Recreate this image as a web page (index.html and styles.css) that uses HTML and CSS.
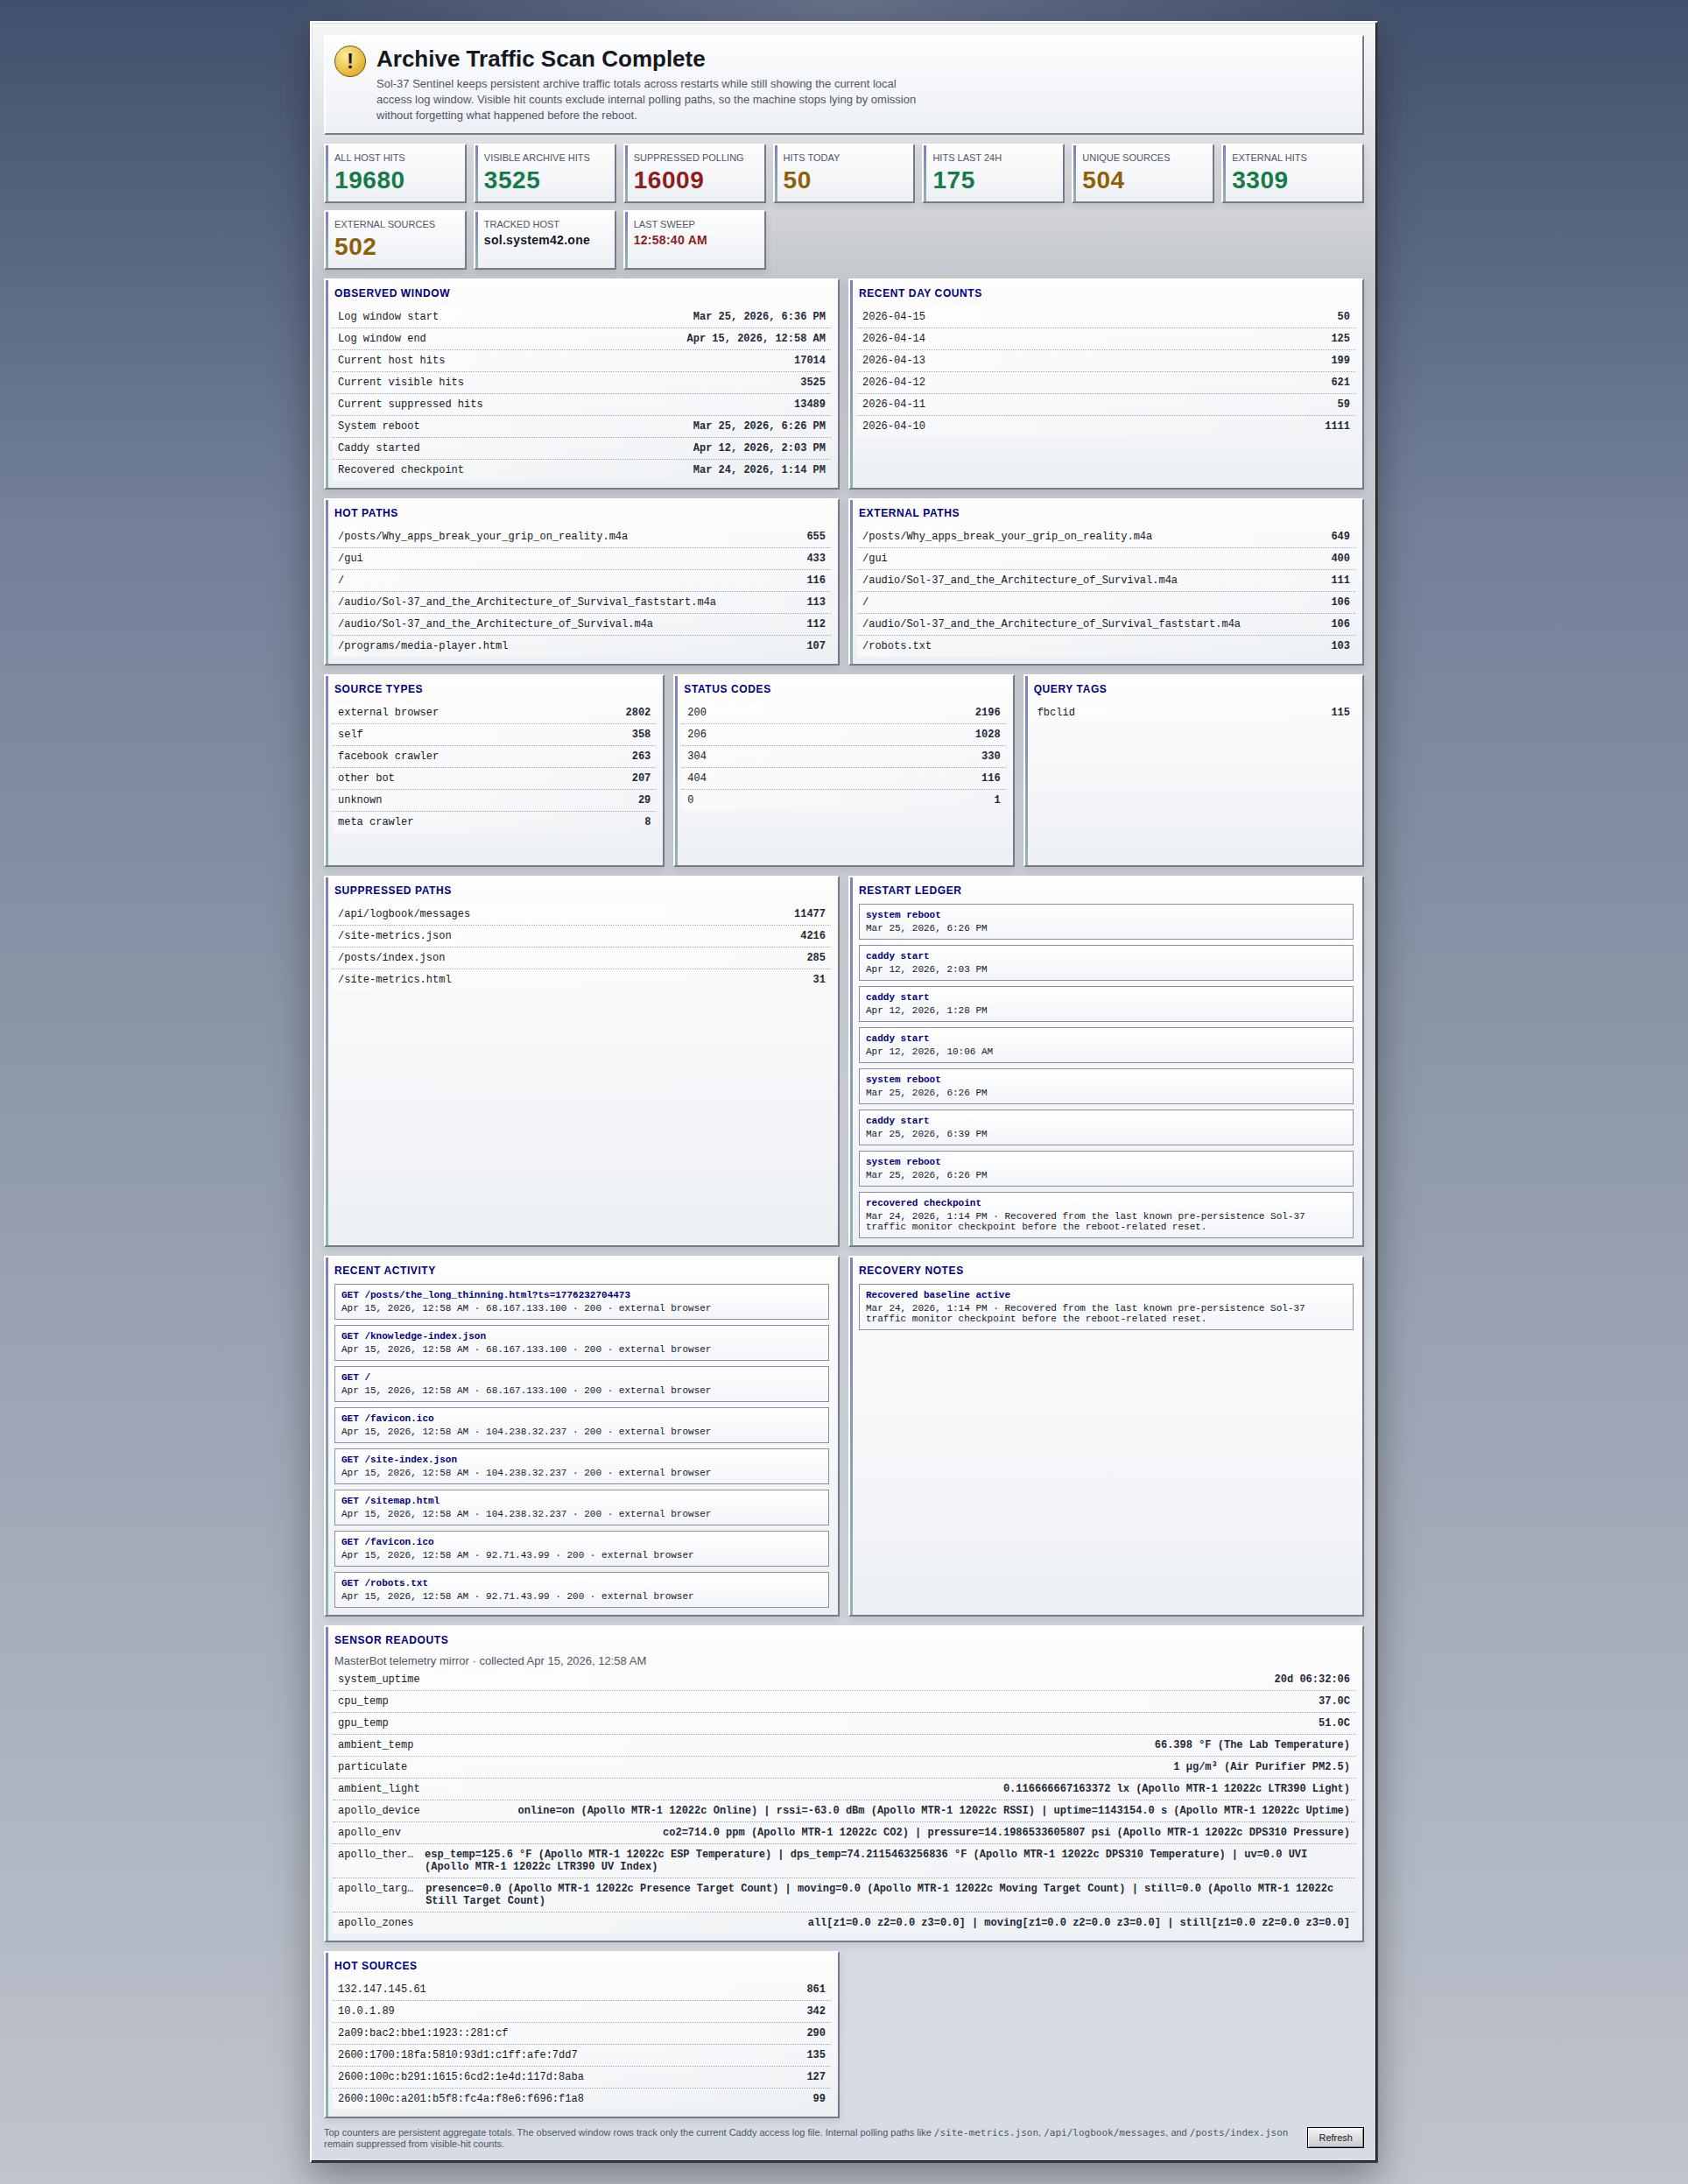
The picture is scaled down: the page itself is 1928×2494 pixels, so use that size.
FILE: index.html
```html
<!DOCTYPE html>
<html lang="en">
<head>
<meta charset="utf-8">
<title>Archive Traffic Scan</title>
<link rel="stylesheet" href="styles.css">
</head>
<body>
<main class="window">
  <header class="hero">
    <div class="badge" aria-hidden="true">!</div>
    <div>
      <h1 class="hero-title">Archive Traffic Scan Complete</h1>
      <p class="copy">Sol-37 Sentinel keeps persistent archive traffic totals across restarts while still showing the current local access log window. Visible hit counts exclude internal polling paths, so the machine stops lying by omission without forgetting what happened before the reboot.</p>
    </div>
  </header>

  <section class="stats">
    <div class="card"><div class="label">All host hits</div><div class="value good">19680</div></div>
    <div class="card"><div class="label">Visible archive hits</div><div class="value good">3525</div></div>
    <div class="card"><div class="label">Suppressed polling</div><div class="value bad">16009</div></div>
    <div class="card"><div class="label">Hits today</div><div class="value warn">50</div></div>
    <div class="card"><div class="label">Hits last 24h</div><div class="value good">175</div></div>
    <div class="card"><div class="label">Unique sources</div><div class="value warn">504</div></div>
    <div class="card"><div class="label">External hits</div><div class="value good">3309</div></div>
    <div class="card"><div class="label">External sources</div><div class="value warn">502</div></div>
    <div class="card"><div class="label">Tracked host</div><div class="value small">sol.system42.one</div></div>
    <div class="card"><div class="label">Last sweep</div><div class="value small bad">12:58:40 AM</div></div>
  </section>

  <div class="grid">
    <section class="panel">
      <h2 class="panel-title">Observed window</h2>
      <dl class="rows">
        <div class="row"><dt>Log window start</dt><dd>Mar 25, 2026, 6:36 PM</dd></div>
        <div class="row"><dt>Log window end</dt><dd>Apr 15, 2026, 12:58 AM</dd></div>
        <div class="row"><dt>Current host hits</dt><dd>17014</dd></div>
        <div class="row"><dt>Current visible hits</dt><dd>3525</dd></div>
        <div class="row"><dt>Current suppressed hits</dt><dd>13489</dd></div>
        <div class="row"><dt>System reboot</dt><dd>Mar 25, 2026, 6:26 PM</dd></div>
        <div class="row"><dt>Caddy started</dt><dd>Apr 12, 2026, 2:03 PM</dd></div>
        <div class="row"><dt>Recovered checkpoint</dt><dd>Mar 24, 2026, 1:14 PM</dd></div>
      </dl>
    </section>
    <section class="panel">
      <h2 class="panel-title">Recent day counts</h2>
      <dl class="rows">
        <div class="row"><dt>2026-04-15</dt><dd>50</dd></div>
        <div class="row"><dt>2026-04-14</dt><dd>125</dd></div>
        <div class="row"><dt>2026-04-13</dt><dd>199</dd></div>
        <div class="row"><dt>2026-04-12</dt><dd>621</dd></div>
        <div class="row"><dt>2026-04-11</dt><dd>59</dd></div>
        <div class="row"><dt>2026-04-10</dt><dd>1111</dd></div>
      </dl>
    </section>
    <section class="panel">
      <h2 class="panel-title">Hot paths</h2>
      <dl class="rows">
        <div class="row"><dt>/posts/Why_apps_break_your_grip_on_reality.m4a</dt><dd>655</dd></div>
        <div class="row"><dt>/gui</dt><dd>433</dd></div>
        <div class="row"><dt>/</dt><dd>116</dd></div>
        <div class="row"><dt>/audio/Sol-37_and_the_Architecture_of_Survival_faststart.m4a</dt><dd>113</dd></div>
        <div class="row"><dt>/audio/Sol-37_and_the_Architecture_of_Survival.m4a</dt><dd>112</dd></div>
        <div class="row"><dt>/programs/media-player.html</dt><dd>107</dd></div>
      </dl>
    </section>
    <section class="panel">
      <h2 class="panel-title">External paths</h2>
      <dl class="rows">
        <div class="row"><dt>/posts/Why_apps_break_your_grip_on_reality.m4a</dt><dd>649</dd></div>
        <div class="row"><dt>/gui</dt><dd>400</dd></div>
        <div class="row"><dt>/audio/Sol-37_and_the_Architecture_of_Survival.m4a</dt><dd>111</dd></div>
        <div class="row"><dt>/</dt><dd>106</dd></div>
        <div class="row"><dt>/audio/Sol-37_and_the_Architecture_of_Survival_faststart.m4a</dt><dd>106</dd></div>
        <div class="row"><dt>/robots.txt</dt><dd>103</dd></div>
      </dl>
    </section>
  </div>

  <div class="grid thirds">
    <section class="panel">
      <h2 class="panel-title">Source types</h2>
      <dl class="rows">
        <div class="row"><dt>external browser</dt><dd>2802</dd></div>
        <div class="row"><dt>self</dt><dd>358</dd></div>
        <div class="row"><dt>facebook crawler</dt><dd>263</dd></div>
        <div class="row"><dt>other bot</dt><dd>207</dd></div>
        <div class="row"><dt>unknown</dt><dd>29</dd></div>
        <div class="row"><dt>meta crawler</dt><dd>8</dd></div>
      </dl>
    </section>
    <section class="panel">
      <h2 class="panel-title">Status codes</h2>
      <dl class="rows">
        <div class="row"><dt>200</dt><dd>2196</dd></div>
        <div class="row"><dt>206</dt><dd>1028</dd></div>
        <div class="row"><dt>304</dt><dd>330</dd></div>
        <div class="row"><dt>404</dt><dd>116</dd></div>
        <div class="row"><dt>0</dt><dd>1</dd></div>
      </dl>
    </section>
    <section class="panel">
      <h2 class="panel-title">Query tags</h2>
      <dl class="rows">
        <div class="row"><dt>fbclid</dt><dd>115</dd></div>
      </dl>
    </section>
  </div>

  <div class="grid">
    <section class="panel">
      <h2 class="panel-title">Suppressed paths</h2>
      <dl class="rows">
        <div class="row"><dt>/api/logbook/messages</dt><dd>11477</dd></div>
        <div class="row"><dt>/site-metrics.json</dt><dd>4216</dd></div>
        <div class="row"><dt>/posts/index.json</dt><dd>285</dd></div>
        <div class="row"><dt>/site-metrics.html</dt><dd>31</dd></div>
      </dl>
    </section>
    <section class="panel">
      <h2 class="panel-title">Restart ledger</h2>
      <ul class="events">
        <li class="event"><strong>system reboot</strong>Mar 25, 2026, 6:26 PM</li>
        <li class="event"><strong>caddy start</strong>Apr 12, 2026, 2:03 PM</li>
        <li class="event"><strong>caddy start</strong>Apr 12, 2026, 1:28 PM</li>
        <li class="event"><strong>caddy start</strong>Apr 12, 2026, 10:06 AM</li>
        <li class="event"><strong>system reboot</strong>Mar 25, 2026, 6:26 PM</li>
        <li class="event"><strong>caddy start</strong>Mar 25, 2026, 6:39 PM</li>
        <li class="event"><strong>system reboot</strong>Mar 25, 2026, 6:26 PM</li>
        <li class="event"><strong>recovered checkpoint</strong>Mar 24, 2026, 1:14 PM · Recovered from the last known pre-persistence Sol-37 traffic monitor checkpoint before the reboot-related reset.</li>
      </ul>
    </section>
    <section class="panel">
      <h2 class="panel-title">Recent activity</h2>
      <ul class="events">
        <li class="event"><strong>GET /posts/the_long_thinning.html?ts=1776232704473</strong>Apr 15, 2026, 12:58 AM · 68.167.133.100 · 200 · external browser</li>
        <li class="event"><strong>GET /knowledge-index.json</strong>Apr 15, 2026, 12:58 AM · 68.167.133.100 · 200 · external browser</li>
        <li class="event"><strong>GET /</strong>Apr 15, 2026, 12:58 AM · 68.167.133.100 · 200 · external browser</li>
        <li class="event"><strong>GET /favicon.ico</strong>Apr 15, 2026, 12:58 AM · 104.238.32.237 · 200 · external browser</li>
        <li class="event"><strong>GET /site-index.json</strong>Apr 15, 2026, 12:58 AM · 104.238.32.237 · 200 · external browser</li>
        <li class="event"><strong>GET /sitemap.html</strong>Apr 15, 2026, 12:58 AM · 104.238.32.237 · 200 · external browser</li>
        <li class="event"><strong>GET /favicon.ico</strong>Apr 15, 2026, 12:58 AM · 92.71.43.99 · 200 · external browser</li>
        <li class="event"><strong>GET /robots.txt</strong>Apr 15, 2026, 12:58 AM · 92.71.43.99 · 200 · external browser</li>
      </ul>
    </section>
    <section class="panel">
      <h2 class="panel-title">Recovery notes</h2>
      <ul class="events">
        <li class="event"><strong>Recovered baseline active</strong>Mar 24, 2026, 1:14 PM · Recovered from the last known pre-persistence Sol-37 traffic monitor checkpoint before the reboot-related reset.</li>
      </ul>
    </section>
    <section class="panel wide">
      <h2 class="panel-title">Sensor readouts</h2>
      <p class="copy">MasterBot telemetry mirror · collected Apr 15, 2026, 12:58 AM</p>
      <dl class="rows">
        <div class="row"><dt>system_uptime</dt><dd>20d 06:32:06</dd></div>
        <div class="row"><dt>cpu_temp</dt><dd>37.0C</dd></div>
        <div class="row"><dt>gpu_temp</dt><dd>51.0C</dd></div>
        <div class="row"><dt>ambient_temp</dt><dd>66.398 °F (The Lab Temperature)</dd></div>
        <div class="row"><dt>particulate</dt><dd>1 µg/m³ (Air Purifier PM2.5)</dd></div>
        <div class="row"><dt>ambient_light</dt><dd>0.116666667163372 lx (Apollo MTR-1 12022c LTR390 Light)</dd></div>
        <div class="row"><dt>apollo_device</dt><dd>online=on (Apollo MTR-1 12022c Online) | rssi=-63.0 dBm (Apollo MTR-1 12022c RSSI) | uptime=1143154.0 s (Apollo MTR-1 12022c Uptime)</dd></div>
        <div class="row"><dt>apollo_env</dt><dd>co2=714.0 ppm (Apollo MTR-1 12022c CO2) | pressure=14.1986533605807 psi (Apollo MTR-1 12022c DPS310 Pressure)</dd></div>
        <div class="row"><dt>apollo_thermals</dt><dd>esp_temp=125.6 °F (Apollo MTR-1 12022c ESP Temperature) | dps_temp=74.2115463256836 °F (Apollo MTR-1 12022c DPS310 Temperature) | uv=0.0 UVI (Apollo MTR-1 12022c LTR390 UV Index)</dd></div>
        <div class="row"><dt>apollo_targets</dt><dd>presence=0.0 (Apollo MTR-1 12022c Presence Target Count) | moving=0.0 (Apollo MTR-1 12022c Moving Target Count) | still=0.0 (Apollo MTR-1 12022c Still Target Count)</dd></div>
        <div class="row"><dt>apollo_zones</dt><dd>all[z1=0.0 z2=0.0 z3=0.0] | moving[z1=0.0 z2=0.0 z3=0.0] | still[z1=0.0 z2=0.0 z3=0.0]</dd></div>
      </dl>
    </section>
    <section class="panel">
      <h2 class="panel-title">Hot sources</h2>
      <dl class="rows">
        <div class="row"><dt>132.147.145.61</dt><dd>861</dd></div>
        <div class="row"><dt>10.0.1.89</dt><dd>342</dd></div>
        <div class="row"><dt>2a09:bac2:bbe1:1923::281:cf</dt><dd>290</dd></div>
        <div class="row"><dt>2600:1700:18fa:5810:93d1:c1ff:afe:7dd7</dt><dd>135</dd></div>
        <div class="row"><dt>2600:100c:b291:1615:6cd2:1e4d:117d:8aba</dt><dd>127</dd></div>
        <div class="row"><dt>2600:100c:a201:b5f8:fc4a:f8e6:f696:f1a8</dt><dd>99</dd></div>
      </dl>
    </section>
  </div>

  <footer class="footer">
    <p class="note">Top counters are persistent aggregate totals. The observed window rows track only the current Caddy access log file. Internal polling paths like <code>/site-metrics.json</code>, <code>/api/logbook/messages</code>, and <code>/posts/index.json</code> remain suppressed from visible-hit counts.</p>
    <button class="refresh" type="button">Refresh</button>
  </footer>
</main>
</body>
</html>
```
FILE: styles.css
```css
* { box-sizing: border-box; }

body {
  margin: 0;
  min-height: 100vh;
  padding: 24px;
  font-family: Arial, "Liberation Sans", sans-serif;
  color: #15181f;
  background:
    radial-gradient(circle at top, rgba(255, 255, 255, 0.18), transparent 640px),
    linear-gradient(180deg, #43506d 0%, #738098 24%, #98a2b1 60%, #c0c4ce 100%);
}

h1, h2, p, dl, dd, ul { margin: 0; padding: 0; }

.window {
  max-width: 1220px;
  margin: 0 auto;
  padding: 14px;
  display: flex;
  flex-direction: column;
  gap: 10px;
  border: 2px solid;
  border-color: #fff #404040 #404040 #fff;
  background:
    linear-gradient(180deg, rgba(255, 255, 255, 0.86), rgba(255, 255, 255, 0) 300px),
    linear-gradient(180deg, #c0c3c8, #d7dbe3);
  box-shadow: inset -1px -1px #000, inset 1px 1px #dfdfdf, 0 18px 40px rgba(0, 0, 0, 0.35);
}

.hero, .card, .panel {
  border: 2px solid;
  border-color: #fff #777b87 #777b87 #fff;
}

.hero {
  display: flex;
  align-items: flex-start;
  gap: 12px;
  padding: 10px 10px 11px;
  background: linear-gradient(180deg, #fbfdff, #f4f5f8 60%, #ecf0f4);
}

.badge {
  flex: none;
  width: 36px;
  height: 36px;
  border: 1px solid #6b5210;
  border-radius: 50%;
  background: radial-gradient(circle at 35% 30%, #ffec9c, #e0b02c 75%, #c8941c);
  font-size: 24px;
  font-weight: 700;
  line-height: 34px;
  text-align: center;
}

.hero-title {
  margin-bottom: 5px;
  font-size: 26px;
  line-height: 30px;
}

.copy {
  max-width: 620px;
  font-size: 13px;
  line-height: 18px;
  color: #4f5666;
}

.stats {
  display: grid;
  grid-template-columns: repeat(auto-fill, minmax(150px, 1fr));
  gap: 8px;
}

.card, .panel {
  position: relative;
  padding: 8px 10px;
  background: linear-gradient(180deg, #fdfdfd, #f4f5f8 65%, #ecf0f3);
  box-shadow: 0 4px 8px rgba(20, 30, 60, 0.1);
}

.card { padding-bottom: 10px; }

.card::before, .panel::before {
  content: "";
  position: absolute;
  inset: 0 auto 0 0;
  width: 3px;
  background: linear-gradient(180deg, #000080, #2f7f60);
  opacity: 0.5;
}

.label {
  margin-bottom: 4px;
  font-size: 11px;
  line-height: 13px;
  text-transform: uppercase;
  color: #4f5666;
}

.value {
  font-size: 28px;
  font-weight: 700;
  line-height: 29px;
  letter-spacing: 0.02em;
}

.value.small { font-size: 14px; line-height: 14px; }

.good { color: #177a4a; }
.bad { color: #8f1d1d; }
.warn { color: #8f5f08; }

.grid {
  display: grid;
  grid-template-columns: repeat(2, minmax(0, 1fr));
  gap: 10px;
}

.thirds { grid-template-columns: repeat(3, minmax(0, 1fr)); }
.thirds .panel { min-height: 220px; }
.wide { grid-column: 1 / -1; }

.panel-title {
  margin-bottom: 8px;
  font-size: 12px;
  line-height: 14px;
  letter-spacing: 0.05em;
  text-transform: uppercase;
  color: #000080;
}

.rows {
  margin: 0 -2px;
  font: 12px/14px "Courier New", "Liberation Mono", monospace;
}

.row {
  display: flex;
  justify-content: space-between;
  gap: 10px;
  padding: 5px 6px;
  border-bottom: 1px dotted #a3a8b4;
  background: linear-gradient(90deg, rgba(255, 255, 255, 0.5), rgba(255, 255, 255, 0));
}

.row:last-child { border-bottom: 0; }

.row dt {
  min-width: 0;
  overflow: hidden;
  text-overflow: ellipsis;
  white-space: nowrap;
}

.row dd { font-weight: 700; color: #1f2937; }

.events {
  display: grid;
  gap: 6px;
  list-style: none;
  font: 11px/12px "Courier New", "Liberation Mono", monospace;
}

.event {
  padding: 6px 7px;
  border: 1px solid #8890a2;
  background: linear-gradient(180deg, #fff, #f3f5f9);
}

.event strong {
  display: block;
  margin-bottom: 3px;
  color: #000080;
}

.footer {
  display: flex;
  justify-content: space-between;
  align-items: flex-start;
  gap: 12px;
}

.note {
  font-size: 11px;
  color: #4f5666;
}

.note code { font-family: "DejaVu Sans Mono", monospace; font-size: 11px; }

.refresh {
  flex: none;
  height: 24px;
  padding: 0 12px;
  border: 1px solid #000;
  background: linear-gradient(180deg, #f6f6f7, #c6c8cb);
  box-shadow: inset 1px 1px #fff, inset -1px -1px #808080;
  font: 11px Arial, "Liberation Sans", sans-serif;
  color: #15181f;
}
```
